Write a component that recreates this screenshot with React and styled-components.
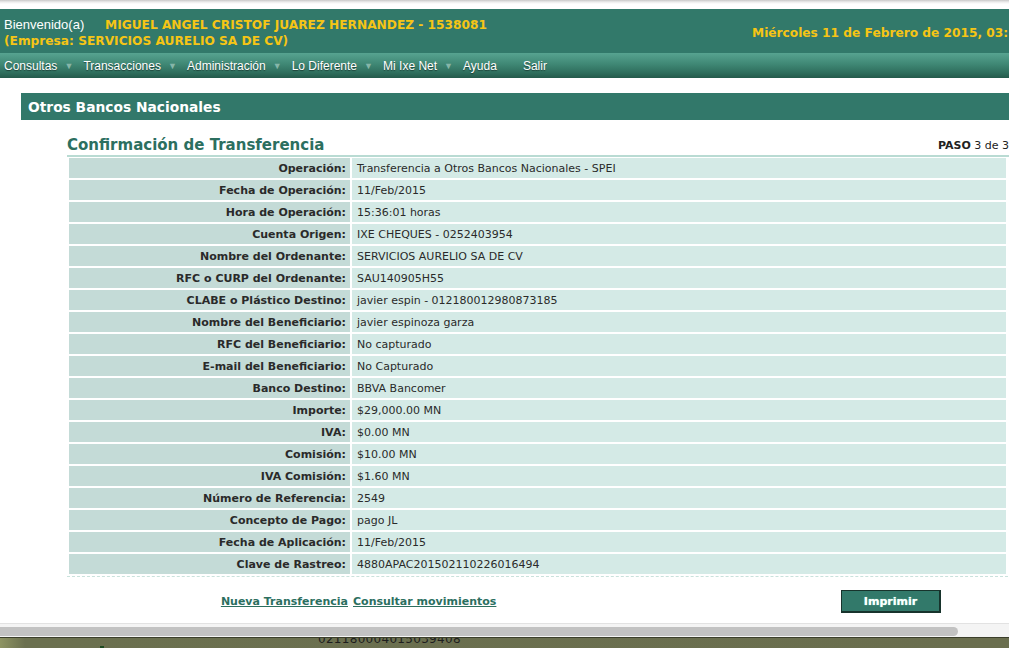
import React from 'react';
import styled, { createGlobalStyle } from 'styled-components';

const GlobalStyle = createGlobalStyle`
    html, body {
        margin: 0;
        padding: 0;
        background: #ffffff;
        overflow: hidden;
    }
    body {
        font-family: "DejaVu Sans", Verdana, sans-serif;
        font-size: 11px;
        color: #2b2b2b;
    }
`;

const rows = [
    ['Operación:', 'Transferencia a Otros Bancos Nacionales - SPEI'],
    ['Fecha de Operación:', '11/Feb/2015'],
    ['Hora de Operación:', '15:36:01 horas'],
    ['Cuenta Origen:', 'IXE CHEQUES - 0252403954'],
    ['Nombre del Ordenante:', 'SERVICIOS AURELIO SA DE CV'],
    ['RFC o CURP del Ordenante:', 'SAU140905H55'],
    ['CLABE o Plástico Destino:', 'javier espin - 012180012980873185'],
    ['Nombre del Beneficiario:', 'javier espinoza garza'],
    ['RFC del Beneficiario:', 'No capturado'],
    ['E-mail del Beneficiario:', 'No Capturado'],
    ['Banco Destino:', 'BBVA Bancomer'],
    ['Importe:', '$29,000.00 MN'],
    ['IVA:', '$0.00 MN'],
    ['Comisión:', '$10.00 MN'],
    ['IVA Comisión:', '$1.60 MN'],
    ['Número de Referencia:', '2549'],
    ['Concepto de Pago:', 'pago JL'],
    ['Fecha de Aplicación:', '11/Feb/2015'],
    ['Clave de Rastreo:', '4880APAC201502110226016494'],
];

const menu = [
    { label: 'Consultas', arrow: true },
    { label: 'Transacciones', arrow: true },
    { label: 'Administración', arrow: true },
    { label: 'Lo Diferente', arrow: true },
    { label: 'Mi Ixe Net', arrow: true },
    { label: 'Ayuda', arrow: false },
    { label: 'Salir', arrow: false },
];

export default function App() {
    return (
        <Shell>
            <GlobalStyle />
            <TopEdge />
            <Header>
                <Welcome>
                    <Line>
                        <Hello>Bienvenido(a)</Hello>
                        <Yellow>MIGUEL ANGEL CRISTOF JUAREZ HERNANDEZ - 1538081</Yellow>
                    </Line>
                    <Line>
                        <Yellow>(Empresa: SERVICIOS AURELIO SA DE CV)</Yellow>
                    </Line>
                </Welcome>
                <DateText>Miércoles 11 de Febrero de 2015, 03:36 p.m.</DateText>
            </Header>
            <MenuBar>
                {menu.map((m) => (
                    <MenuItem key={m.label}>
                        {m.label}
                        <Arrow $hidden={!m.arrow}>▼</Arrow>
                    </MenuItem>
                ))}
            </MenuBar>
            <Main>
                <SectionBar>Otros Bancos Nacionales</SectionBar>
                <Content>
                    <TitleRow>
                        <Title>Confirmación de Transferencia</Title>
                        <Step><b>PASO</b> 3 de 3</Step>
                    </TitleRow>
                    <DataTable>
                        <tbody>
                            {rows.map(([label, value]) => (
                                <tr key={label}>
                                    <LabelCell>{label}</LabelCell>
                                    <ValueCell>{value}</ValueCell>
                                </tr>
                            ))}
                        </tbody>
                    </DataTable>
                    <Actions>
                        <LeftAction>
                            <ActionLink href="#">Nueva Transferencia</ActionLink>
                        </LeftAction>
                        <RightAction>
                            <ActionLink href="#">Consultar movimientos</ActionLink>
                            <PrintButton>Imprimir</PrintButton>
                        </RightAction>
                    </Actions>
                </Content>
            </Main>
            <ScrollTrack>
                <Thumb />
            </ScrollTrack>
            <Underlay>
                <Mark />
                <Behind>021180004015039408</Behind>
            </Underlay>
        </Shell>
    );
}

const Shell = styled.div`
    width: 1009px;
    height: 648px;
    display: flex;
    flex-direction: column;
    overflow: hidden;
`;

const TopEdge = styled.div`
    height: 9px;
    flex-shrink: 0;
    background: linear-gradient(#c9c9c9, #ececec 2px, #ffffff 4px);
`;

const Header = styled.div`
    height: 44px;
    flex-shrink: 0;
    background: #32796a;
    display: grid;
    grid-template-columns: 748px auto;
    align-items: center;
    padding-left: 4px;
    white-space: nowrap;
    overflow: hidden;
`;

const Welcome = styled.div`
    display: flex;
    flex-direction: column;
    gap: 1px;
    padding-top: 5px;
`;

const Line = styled.div`
    display: flex;
    align-items: baseline;
    height: 16px;
`;

const Hello = styled.span`
    font-family: "Liberation Sans", Arial, sans-serif;
    font-size: 13px;
    color: #ffffff;
    width: 101px;
`;

const Yellow = styled.span`
    font-family: "DejaVu Sans", Verdana, sans-serif;
    font-weight: bold;
    font-size: 12.2px;
    color: #f6c515;
`;

const DateText = styled.span`
    font-weight: bold;
    font-size: 12.2px;
    color: #f6c515;
    padding-top: 3px;
`;

const MenuBar = styled.div`
    height: 25px;
    flex-shrink: 0;
    display: flex;
    align-items: center;
    padding-left: 4px;
    background: linear-gradient(#57a390, #3f8774 45%, #2e6d5c 80%, #245a4b);
`;

const MenuItem = styled.span`
    font-family: "Liberation Sans", Arial, sans-serif;
    font-size: 12px;
    color: #ffffff;
    text-shadow: 0 1px 1px rgba(0, 0, 0, 0.45);
    display: flex;
    align-items: center;
    margin-right: 11px;
`;

const Arrow = styled.span`
    font-size: 9px;
    color: #86b6a9;
    text-shadow: none;
    margin-left: 7px;
    width: 8px;
    visibility: ${(p) => (p.$hidden ? 'hidden' : 'visible')};
`;

const Main = styled.div`
    flex: 1;
    padding: 15px 0 0 21px;
    overflow: hidden;
`;

const SectionBar = styled.div`
    height: 27px;
    background: #32786a;
    color: #ffffff;
    font-weight: bold;
    font-size: 13.8px;
    display: flex;
    align-items: center;
    padding-left: 7px;
`;

const Content = styled.div`
    margin-left: 46px;
    margin-top: 14px;
`;

const TitleRow = styled.div`
    display: flex;
    justify-content: space-between;
    align-items: flex-end;
    height: 20px;
    padding-bottom: 1px;
    border-bottom: 2px solid #b9dbd3;
`;

const Title = styled.h2`
    margin: 0;
    font-size: 15px;
    font-weight: bold;
    color: #2c6f5f;
    line-height: 17px;
`;

const Step = styled.span`
    font-size: 11px;
    color: #222;
    line-height: 16px;
    b {
        font-weight: bold;
    }
`;

const DataTable = styled.table`
    width: 941px;
    border-collapse: separate;
    border-spacing: 2px;
    border-bottom: 1px dashed #c9e2dc;
    margin-top: -1px;
`;

const LabelCell = styled.td`
    width: 277px;
    height: 20px;
    padding: 0 4px 0 0;
    background: #c4dbd7;
    text-align: right;
    font-weight: bold;
    color: #2a2a2a;
`;

const ValueCell = styled.td`
    height: 20px;
    padding: 0 5px;
    background: #d4eae6;
    color: #2a2a2a;
`;

const Actions = styled.div`
    display: grid;
    grid-template-columns: 283px 1fr;
    align-items: center;
    margin-top: 13px;
`;

const LeftAction = styled.div`
    text-align: right;
    padding-right: 2px;
`;

const RightAction = styled.div`
    display: flex;
    align-items: center;
    justify-content: space-between;
    padding: 0 68px 0 3px;
`;

const ActionLink = styled.a`
    font-weight: bold;
    font-size: 11px;
    color: #2c6f5f;
    text-decoration: underline;
`;

const PrintButton = styled.button`
    width: 100px;
    height: 23px;
    background: #32796a;
    border: 1px solid #17332c;
    border-right-width: 2px;
    border-bottom-width: 2px;
    color: #ffffff;
    font-family: "DejaVu Sans", Verdana, sans-serif;
    font-weight: bold;
    font-size: 11px;
    text-shadow: 0 0 1px #9fd;
    padding: 0;
`;

const ScrollTrack = styled.div`
    height: 15px;
    flex-shrink: 0;
    background: #f4f4f4;
    border-top: 1px solid #e2e2e2;
    border-bottom: 1px solid #3b3e2b;
    padding-top: 3px;
    box-sizing: border-box;
`;

const Thumb = styled.div`
    width: 958px;
    height: 9px;
    border-radius: 0 5px 5px 0;
    background: #c2c2c2;
`;

const Underlay = styled.div`
    height: 10px;
    flex-shrink: 0;
    background: linear-gradient(90deg, #8e9463, #6b704f 25px, #6a6e4e);
    position: relative;
    overflow: hidden;
`;

const Mark = styled.div`
    position: absolute;
    left: 100px;
    bottom: 0;
    width: 4px;
    height: 2px;
    background: #1d4a20;
`;

const Behind = styled.span`
    position: absolute;
    left: 318px;
    top: -6px;
    font-size: 12px;
    color: #1e1e1e;
    letter-spacing: 0.3px;
`;
